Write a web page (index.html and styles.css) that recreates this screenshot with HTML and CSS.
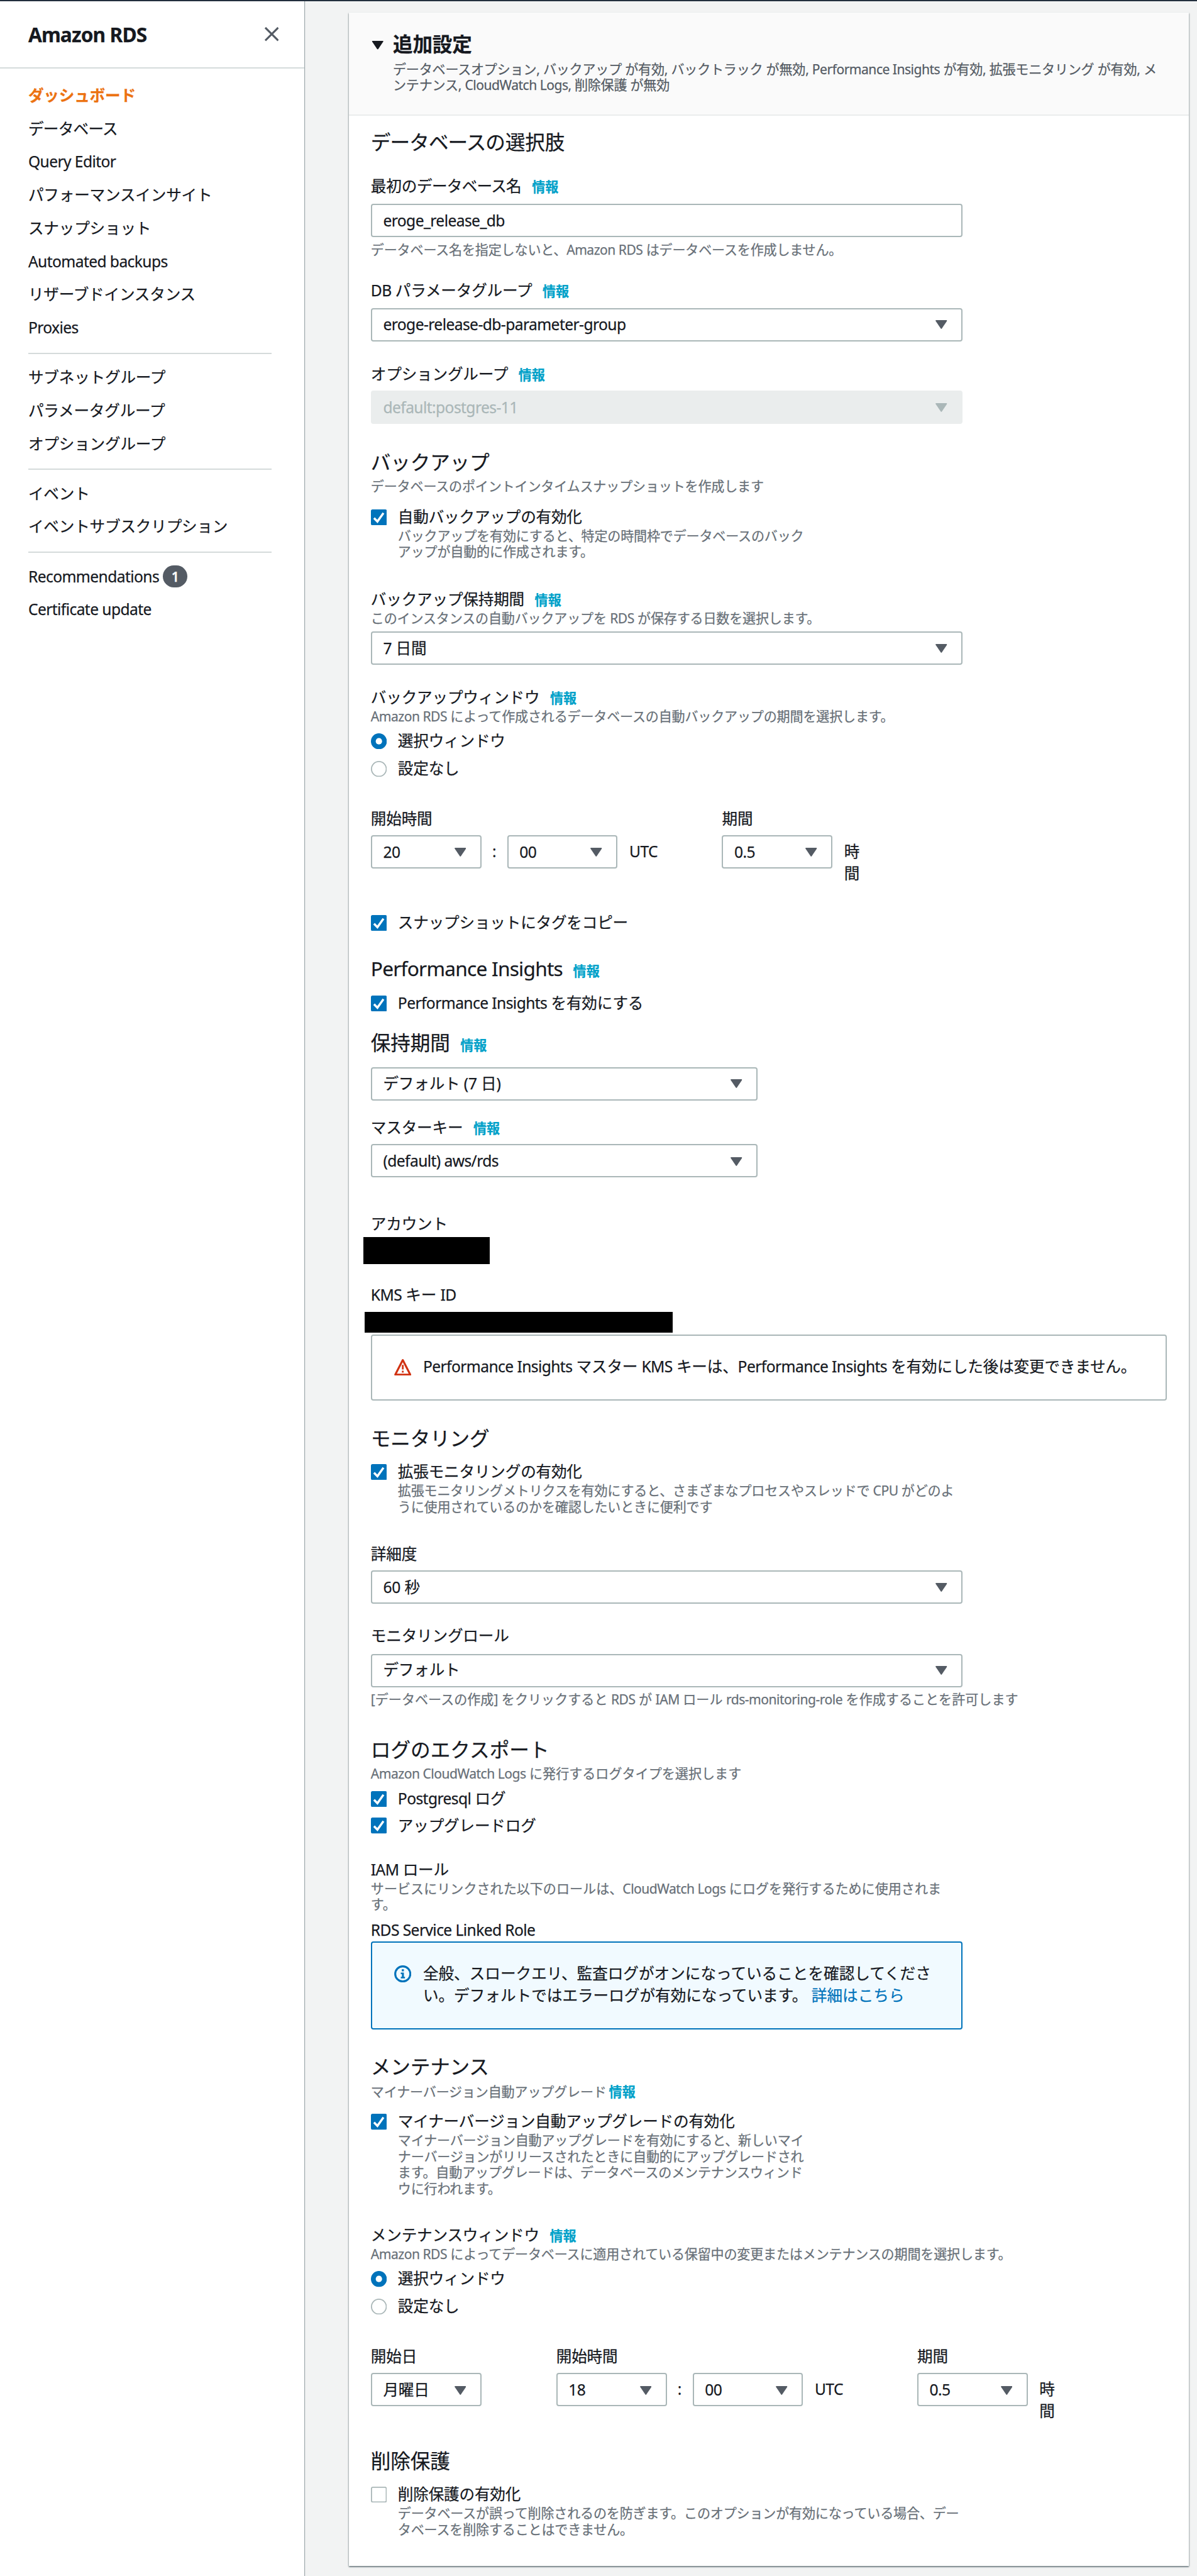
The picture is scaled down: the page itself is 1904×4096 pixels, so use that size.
FILE: index.html
```html
<!DOCTYPE html>
<html lang="ja">
<head>
<meta charset="utf-8">
<title>Amazon RDS</title>
<link rel="stylesheet" href="styles.css">
</head>
<body>
<svg class="defs" aria-hidden="true">
  <symbol id="check" viewBox="0 0 14 14"><rect width="14" height="14" rx="1.4" fill="#0073bb"/><path d="M2.7 7.6 5.7 10.6 11 3.2" fill="none" stroke="#fff" stroke-width="1.9"/></symbol>
  <symbol id="uncheck" viewBox="0 0 14 14"><rect x=".5" y=".5" width="13" height="13" rx="1.3" fill="#fff" stroke="#aab7b8"/></symbol>
  <symbol id="radio-on" viewBox="0 0 14 14"><circle cx="7" cy="7" r="7" fill="#0073bb"/><circle cx="7" cy="7" r="2.8" fill="#fff"/></symbol>
  <symbol id="radio-off" viewBox="0 0 14 14"><circle cx="7" cy="7" r="6.5" fill="#fff" stroke="#aab7b8"/></symbol>
  <symbol id="caret" viewBox="0 0 20 15"><path d="M1.2 0h17.6q1.6 0 .8 1.5L11 14.2q-1 1.4-2 0L.4 1.5Q-.4 0 1.2 0z" fill="currentColor"/></symbol>
</svg>
<div class="topbar"></div>
<div class="layout">
  <nav class="sidebar">
    <header class="side-head">
      <h1 class="side-title">Amazon RDS</h1>
      <svg class="close" viewBox="0 0 23 23"><path d="M1 1 22 22M22 1 1 22" stroke="#545b64" stroke-width="3.2" fill="none"/></svg>
    </header>
    <ul class="side-list">
      <li class="active">ダッシュボード</li>
      <li><span class="kern">データベース</span></li>
      <li class="en">Query Editor</li>
      <li>パフォーマンスインサイト</li>
      <li>スナップショット</li>
      <li class="en">Automated backups</li>
      <li>リザーブドインスタンス</li>
      <li class="en">Proxies</li>
    </ul>
    <ul class="side-list">
      <li>サブネットグループ</li>
      <li>パラメータグループ</li>
      <li>オプショングループ</li>
    </ul>
    <ul class="side-list">
      <li>イベント</li>
      <li>イベントサブスクリプション</li>
    </ul>
    <ul class="side-list">
      <li class="en">Recommendations<span class="badge">1</span></li>
      <li class="en">Certificate update</li>
    </ul>
  </nav>
  <main class="main">
    <section class="panel">
      <header class="panel-head">
        <svg class="fold"><use href="#caret"/></svg>
        <div>
          <h2 class="panel-title">追加設定</h2>
          <p class="small summary">データベースオプション, バックアップ が有効, バックトラック が無効, <span class="en">Performance Insights</span> が有効, 拡張モニタリング が有効, メ<br>ンテナンス, <span class="en">CloudWatch Logs,</span> 削除保護 が無効</p>
        </div>
      </header>
      <div class="panel-body">
        <h3 class="heading mt-22"><span class="kern">データベース</span>の選択肢</h3>
        <div class="label mt-34">最初の<span class="kern">データベース</span>名<a class="info">情報</a></div>
        <div class="field mt-12"><span class="en">eroge_release_db</span></div>
        <p class="small mt-7">データベース名を指定しないと、<span class="en">Amazon RDS</span> はデータベースを作成しません。</p>
        <div class="label mt-35"><span class="en">DB</span> パラメータグループ<a class="info">情報</a></div>
        <div class="field raised mt-12"><span class="en">eroge-release-db-parameter-group</span><svg class="caret"><use href="#caret"/></svg></div>
        <div class="label mt-34">オプショングループ<a class="info">情報</a></div>
        <div class="field disabled mt-10"><span class="en">default:postgres-11</span><svg class="caret"><use href="#caret"/></svg></div>

        <h3 class="heading mt-41">バックアップ</h3>
        <p class="small mt-7">データベースのポイントインタイムスナップショットを作成します</p>
        <div class="choice mt-18"><svg class="mark"><use href="#check"/></svg><span>自動バックアップの有効化</span></div>
        <p class="small indent mt-1">バックアップを有効にすると、特定の時間枠でデータベースのバック<br>アップが自動的に作成されます。</p>
        <div class="label mt-45">バックアップ保持期間<a class="info">情報</a></div>
        <p class="small mt-1">このインスタンスの自動バックアップを <span class="en">RDS</span> が保存する日数を選択します。</p>
        <div class="field mt-9"><span>7 日間</span><svg class="caret"><use href="#caret"/></svg></div>
        <div class="label mt-34">バックアップウィンドウ<a class="info">情報</a></div>
        <p class="small mt-1"><span class="en">Amazon RDS</span> によって作成されるデータベースの自動バックアップの期間を選択します。</p>
        <div class="choice mt-8"><svg class="mark"><use href="#radio-on"/></svg><span>選択ウィンドウ</span></div>
        <div class="choice mt-9"><svg class="mark"><use href="#radio-off"/></svg><span>設定なし</span></div>
        <div class="times mt-46">
          <div class="time-group start">
            <div class="label">開始時間</div>
            <div class="time-row">
              <div class="field"><span class="en">20</span><svg class="caret"><use href="#caret"/></svg></div>
              <span class="colon">:</span>
              <div class="field"><span class="en">00</span><svg class="caret"><use href="#caret"/></svg></div>
              <span class="unit en">UTC</span>
            </div>
          </div>
          <div class="time-group">
            <div class="label">期間</div>
            <div class="time-row">
              <div class="field"><span class="en">0.5</span><svg class="caret"><use href="#caret"/></svg></div>
              <span class="unit">時<br>間</span>
            </div>
          </div>
        </div>
        <div class="choice mt-43"><svg class="mark"><use href="#check"/></svg><span>スナップショットにタグをコピー</span></div>

        <h3 class="heading mt-37"><span class="en">Performance Insights</span><a class="info">情報</a></h3>
        <div class="choice mt-18"><svg class="mark"><use href="#check"/></svg><span><span class="en">Performance Insights</span> を有効にする</span></div>
        <h3 class="heading mt-26">保持期間<a class="info">情報</a></h3>
        <div class="field medium raised mt-22"><span>デフォルト (7 日)</span><svg class="caret"><use href="#caret"/></svg></div>
        <div class="label mt-25">マスターキー<a class="info">情報</a></div>
        <div class="field medium mt-10"><span class="en">(default) aws/rds</span><svg class="caret"><use href="#caret"/></svg></div>
        <div class="label mt-56">アカウント</div>
        <div class="redacted account mt-5"></div>
        <div class="label mt-31"><span class="en">KMS</span> キー <span class="en">ID</span></div>
        <div class="redacted key mt-11"></div>
        <div class="alert warn mt-3">
          <svg class="alert-icon" viewBox="0 0 28 28"><path d="M14 2.6 26.2 26.4H1.8z" fill="none" stroke="#d13212" stroke-width="3.2" stroke-linejoin="round"/><path d="M14 10.5v7.5M14 20v3" stroke="#d13212" stroke-width="2.8"/></svg>
          <p><span class="en">Performance Insights</span> マスター <span class="en">KMS</span> キーは、<span class="en">Performance Insights</span> を有効にした後は変更できません。</p>
        </div>

        <h3 class="heading mt-40">モニタリング</h3>
        <div class="choice mt-16"><svg class="mark"><use href="#check"/></svg><span>拡張モニタリングの有効化</span></div>
        <p class="small indent mt-1">拡張モニタリングメトリクスを有効にすると、さまざまなプロセスやスレッドで <span class="en">CPU</span> がどのよ<br>うに使用されているのかを確認したいときに便利です</p>
        <div class="label mt-45">詳細度</div>
        <div class="field mt-10"><span>60 秒</span><svg class="caret"><use href="#caret"/></svg></div>
        <div class="label mt-33">モニタリングロール</div>
        <div class="field raised mt-13"><span>デフォルト</span><svg class="caret"><use href="#caret"/></svg></div>
        <p class="small wide mt-7">[データベースの作成] をクリックすると <span class="en">RDS</span> が <span class="en">IAM</span> ロール <span class="en">rds-monitoring-role</span> を作成することを許可します</p>

        <h3 class="heading wide mt-47">ログのエクスポート</h3>
        <p class="small wide mt-7"><span class="en">Amazon CloudWatch Logs</span> に発行するログタイプを選択します</p>
        <div class="choice mt-9"><svg class="mark"><use href="#check"/></svg><span><span class="en">Postgresql</span> ログ</span></div>
        <div class="choice mt-8"><svg class="mark"><use href="#check"/></svg><span>アップグレードログ</span></div>
        <div class="label mt-36"><span class="en">IAM</span> ロール</div>
        <p class="small wide mt-1">サービスにリンクされた以下のロールは、<span class="en">CloudWatch Logs</span> にログを発行するために使用されま<br>す。</p>
        <div class="label mt-9"><span class="en">RDS Service Linked Role</span></div>
        <div class="alert note mt-2">
          <svg class="alert-icon" viewBox="0 0 28 28"><circle cx="14" cy="14" r="12.3" fill="none" stroke="#0073bb" stroke-width="3.2"/><path d="M12.4 6.4h3.4v3.4h-3.4zM10.8 11.8h5v6.8h1.8v2.6h-6.8v-2.6h1.8v-4.2h-1.8z" fill="#0073bb"/></svg>
          <p class="wide">全般、スロークエリ、監査ログがオンになっていることを確認してくださ<br>い。デフォルトではエラーログが有効になっています。 <a class="link">詳細はこちら</a></p>
        </div>

        <h3 class="heading mt-39">メンテナンス</h3>
        <p class="small mt-9">マイナーバージョン自動アップグレード<a class="info tight">情報</a></p>
        <div class="choice mt-16"><svg class="mark"><use href="#check"/></svg><span>マイナーバージョン自動アップグレードの有効化</span></div>
        <p class="small indent mt-1">マイナーバージョン自動アップグレードを有効にすると、新しいマイ<br>ナーバージョンがリリースされたときに自動的にアップグレードされ<br>ます。自動アップグレードは、データベースのメンテナンスウィンド<br>ウに行われます。</p>
        <div class="label mt-44">メンテナンスウィンドウ<a class="info">情報</a></div>
        <p class="small mt-1"><span class="en">Amazon RDS</span> によってデータベースに適用されている保留中の変更またはメンテナンスの期間を選択します。</p>
        <div class="choice mt-8"><svg class="mark"><use href="#radio-on"/></svg><span>選択ウィンドウ</span></div>
        <div class="choice mt-9"><svg class="mark"><use href="#radio-off"/></svg><span>設定なし</span></div>
        <div class="times mt-46">
          <div class="time-group day">
            <div class="label">開始日</div>
            <div class="time-row">
              <div class="field"><span>月曜日</span><svg class="caret"><use href="#caret"/></svg></div>
            </div>
          </div>
          <div class="time-group start-late">
            <div class="label">開始時間</div>
            <div class="time-row">
              <div class="field"><span class="en">18</span><svg class="caret"><use href="#caret"/></svg></div>
              <span class="colon">:</span>
              <div class="field"><span class="en">00</span><svg class="caret"><use href="#caret"/></svg></div>
              <span class="unit en">UTC</span>
            </div>
          </div>
          <div class="time-group">
            <div class="label">期間</div>
            <div class="time-row">
              <div class="field"><span class="en">0.5</span><svg class="caret"><use href="#caret"/></svg></div>
              <span class="unit">時<br>間</span>
            </div>
          </div>
        </div>

        <h3 class="heading mt-42">削除保護</h3>
        <div class="choice mt-16"><svg class="mark"><use href="#uncheck"/></svg><span>削除保護の有効化</span></div>
        <p class="small indent mt-1">データベースが誤って削除されるのを防ぎます。このオプションが有効になっている場合、デー<br>タベースを削除することはできません。</p>
      </div>
    </section>
  </main>
</div>
</body>
</html>
```
FILE: styles.css
```css
* { box-sizing: border-box; margin: 0; padding: 0; }

html { font-size: 9.766px; }

body {
  height: 100vh;
  overflow: hidden;
  display: flex;
  flex-direction: column;
  background: #f2f3f3;
  color: #16191f;
  font-family: "Noto Sans", "Noto Sans CJK JP", sans-serif;
  font-size: 2.52rem;
  line-height: 3.6rem;
  letter-spacing: -.008em;
  white-space: nowrap;
  -webkit-text-stroke: .25px currentColor;
}

.defs { display: none; }
.en { letter-spacing: -.024em; }
.kern { letter-spacing: -.03em; }
.wide { letter-spacing: 0; }

.topbar { height: 2px; flex: none; background: #232f3e; }
.layout { display: flex; flex: 1; min-height: 0; }

/* Sidebar */
.sidebar {
  width: 49.6rem;
  flex: none;
  background: #fff;
  box-shadow: 1px 0 1px rgba(0, 28, 36, .35);
}
.side-head {
  height: 11rem;
  display: flex;
  align-items: center;
  justify-content: space-between;
  padding: 0 4.2rem 0 4.6rem;
  border-bottom: 2px solid #d5dbdb;
}
.side-title {
  font-size: 3.24rem;
  font-weight: 700;
  line-height: 4rem;
  letter-spacing: -.028em;
}
.close { width: 2.3rem; height: 2.3rem; }
.side-list {
  list-style: none;
  margin: 0 5.4rem 0 4.6rem;
}
.side-head + .side-list { margin-top: 1.5rem; }
.side-list + .side-list {
  margin-top: 1.5rem;
  padding-top: 1rem;
  border-top: 2px solid #d5dbdb;
}
.side-list li {
  height: 5.4rem;
  display: flex;
  align-items: center;
  padding-top: .2rem;
}
.side-list .active { color: #ec7211; font-weight: 700; }
.badge {
  width: 4rem;
  height: 3.6rem;
  margin-left: .6rem;
  border-radius: 1.8rem;
  background: #545b64;
  color: #fff;
  font-size: 2.16rem;
  font-weight: 600;
  text-align: center;
}

/* Panel */
.main { flex: 1; padding: 1.8rem 0 0 7.2rem; }
.panel {
  width: 136.8rem;
  height: 415.8rem;
  background: #fff;
  box-shadow: 0 -1px 0 #eaeded, 0 2px 2px rgba(0, 28, 36, .35), 1px 1px 2px rgba(0, 28, 36, .2), -1px 1px 2px rgba(0, 28, 36, .2);
}
.panel-head {
  display: flex;
  height: 16.8rem;
  padding: 3.1rem 0 0 3.7rem;
  background: #fafafa;
  border-bottom: 2px solid #eaeded;
}
.fold { width: 2rem; height: 1.4rem; margin: 1.6rem 1.5rem 0 0; }
.panel-title { font-size: 3.24rem; font-weight: 700; line-height: 4rem; }
.summary { margin-top: .8rem; }
.small.summary { color: #545b64; letter-spacing: -.011em; }
.panel-body { padding: 0 3.6rem; display: flow-root; }

.heading { font-size: 3.24rem; font-weight: 400; line-height: 4rem; height: 4rem; padding-top: .1rem; }
.label { height: 3.6rem; padding-top: .1rem; }
.small { font-size: 2.16rem; line-height: 2.6rem; color: #687078; }
.indent { padding-left: 4.4rem; }
.info {
  margin-left: 1.7rem;
  color: #00a1c9;
  font-size: 2.16rem;
  font-weight: 700;
  line-height: 1;
  letter-spacing: 0;
}
.info.tight { margin-left: .4rem; }
.link { color: #0073bb; }

/* Inputs and selects */
.field {
  width: 96.4rem;
  height: 5.4rem;
  display: flex;
  align-items: center;
  justify-content: space-between;
  padding: 0 2.3rem 0 1.8rem;
  border: 2px solid #aab7b8;
  border-radius: .4rem;
  background: #fff;
}
.field.medium { width: 63rem; }
.field.raised { padding-bottom: .3rem; }
.field.disabled { background: #eaeded; border-color: #eaeded; color: #aab7b8; }
.caret { width: 1.9rem; height: 1.45rem; margin-top: .2rem; color: #545b64; }
.disabled .caret { color: #aab7b8; }

.choice { display: flex; height: 3.6rem; }
.choice > span { padding-top: .1rem; }
.mark { width: 2.6rem; height: 2.6rem; margin: .7rem 1.8rem 0 0; }

.times { display: flex; }
.times .field { width: 18rem; flex: none; }
.time-group.start { width: 57.2rem; }
.time-group.day { width: 30.2rem; }
.time-group.start-late { width: 58.8rem; }
.time-row { display: flex; align-items: flex-start; height: 8rem; margin-top: 1rem; }
.colon { width: 4.2rem; padding-top: .8rem; text-align: center; }
.unit { padding: .8rem 0 0 1.9rem; }

.redacted { background: #000; }
.account { width: 20.6rem; height: 4.4rem; margin-left: -1.2rem; }
.key { width: 50.2rem; height: 3.4rem; margin-left: -1rem; }

.alert {
  display: flex;
  padding: 3.2rem 3.6rem;
  border: 2px solid;
  border-radius: .4rem;
}
.alert.warn { height: 10.8rem; border-color: #aab7b8; }
.alert.note { width: 96.4rem; height: 14.4rem; border-color: #0073bb; background: #f1faff; }
.alert-icon { width: 2.8rem; height: 2.8rem; flex: none; margin: .5rem 1.9rem 0 0; }

/* Vertical rhythm */
.mt-1 { margin-top: .1rem; }
.mt-2 { margin-top: .2rem; }
.mt-3 { margin-top: .3rem; }
.mt-5 { margin-top: .5rem; }
.mt-7 { margin-top: .7rem; }
.mt-8 { margin-top: .8rem; }
.mt-9 { margin-top: .9rem; }
.mt-10 { margin-top: 1rem; }
.mt-11 { margin-top: 1.1rem; }
.mt-12 { margin-top: 1.2rem; }
.mt-13 { margin-top: 1.3rem; }
.mt-16 { margin-top: 1.6rem; }
.mt-18 { margin-top: 1.8rem; }
.mt-22 { margin-top: 2.2rem; }
.mt-25 { margin-top: 2.5rem; }
.mt-26 { margin-top: 2.6rem; }
.mt-31 { margin-top: 3.1rem; }
.mt-33 { margin-top: 3.3rem; }
.mt-34 { margin-top: 3.4rem; }
.mt-35 { margin-top: 3.5rem; }
.mt-36 { margin-top: 3.6rem; }
.mt-37 { margin-top: 3.7rem; }
.mt-39 { margin-top: 3.9rem; }
.mt-40 { margin-top: 4rem; }
.mt-41 { margin-top: 4.1rem; }
.mt-42 { margin-top: 4.2rem; }
.mt-43 { margin-top: 4.3rem; }
.mt-44 { margin-top: 4.4rem; }
.mt-45 { margin-top: 4.5rem; }
.mt-46 { margin-top: 4.6rem; }
.mt-47 { margin-top: 4.7rem; }
.mt-56 { margin-top: 5.6rem; }
```
